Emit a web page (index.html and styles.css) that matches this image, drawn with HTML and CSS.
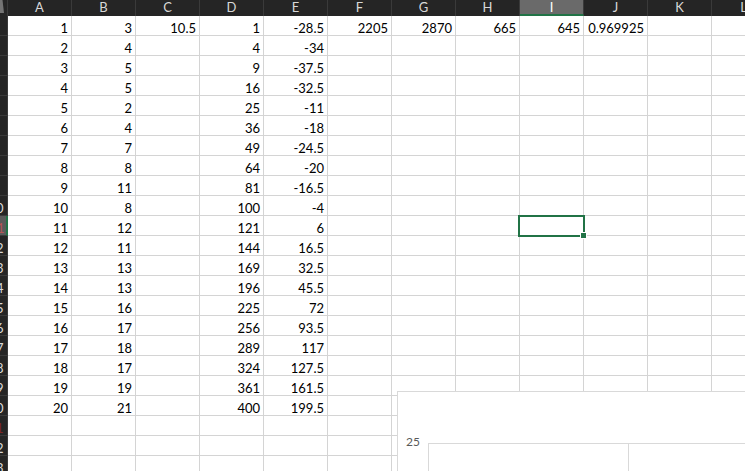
FILE: index.html
```html
<!DOCTYPE html>
<html>
<head>
<meta charset="utf-8">
<link rel="stylesheet" href="styles.css">
</head>
<body>
<div class="sheet">
  <div class="row hdr">
    <div class="corner"><svg width="7" height="16" viewBox="0 0 7 16"><polygon points="0,0 2.5,0 4,13 0,13" fill="#747474"/></svg></div>
    <div class="ch">A</div><div class="ch">B</div><div class="ch">C</div><div class="ch">D</div><div class="ch">E</div><div class="ch">F</div><div class="ch">G</div><div class="ch">H</div><div class="ch on">I</div><div class="ch">J</div><div class="ch">K</div><div class="ch">L</div>
  </div>
  <div class="row"><div class="rh"><span>1</span></div><div class="c">1</div><div class="c">3</div><div class="c">10.5</div><div class="c">1</div><div class="c">-28.5</div><div class="c">2205</div><div class="c">2870</div><div class="c">665</div><div class="c">645</div><div class="c">0.969925</div><div class="c"></div><div class="c"></div></div>
  <div class="row"><div class="rh"><span>2</span></div><div class="c">2</div><div class="c">4</div><div class="c"></div><div class="c">4</div><div class="c">-34</div><div class="c"></div><div class="c"></div><div class="c"></div><div class="c"></div><div class="c"></div><div class="c"></div><div class="c"></div></div>
  <div class="row"><div class="rh"><span>3</span></div><div class="c">3</div><div class="c">5</div><div class="c"></div><div class="c">9</div><div class="c">-37.5</div><div class="c"></div><div class="c"></div><div class="c"></div><div class="c"></div><div class="c"></div><div class="c"></div><div class="c"></div></div>
  <div class="row"><div class="rh"><span>4</span></div><div class="c">4</div><div class="c">5</div><div class="c"></div><div class="c">16</div><div class="c">-32.5</div><div class="c"></div><div class="c"></div><div class="c"></div><div class="c"></div><div class="c"></div><div class="c"></div><div class="c"></div></div>
  <div class="row"><div class="rh"><span>5</span></div><div class="c">5</div><div class="c">2</div><div class="c"></div><div class="c">25</div><div class="c">-11</div><div class="c"></div><div class="c"></div><div class="c"></div><div class="c"></div><div class="c"></div><div class="c"></div><div class="c"></div></div>
  <div class="row"><div class="rh"><span>6</span></div><div class="c">6</div><div class="c">4</div><div class="c"></div><div class="c">36</div><div class="c">-18</div><div class="c"></div><div class="c"></div><div class="c"></div><div class="c"></div><div class="c"></div><div class="c"></div><div class="c"></div></div>
  <div class="row"><div class="rh"><span>7</span></div><div class="c">7</div><div class="c">7</div><div class="c"></div><div class="c">49</div><div class="c">-24.5</div><div class="c"></div><div class="c"></div><div class="c"></div><div class="c"></div><div class="c"></div><div class="c"></div><div class="c"></div></div>
  <div class="row"><div class="rh"><span>8</span></div><div class="c">8</div><div class="c">8</div><div class="c"></div><div class="c">64</div><div class="c">-20</div><div class="c"></div><div class="c"></div><div class="c"></div><div class="c"></div><div class="c"></div><div class="c"></div><div class="c"></div></div>
  <div class="row"><div class="rh"><span>9</span></div><div class="c">9</div><div class="c">11</div><div class="c"></div><div class="c">81</div><div class="c">-16.5</div><div class="c"></div><div class="c"></div><div class="c"></div><div class="c"></div><div class="c"></div><div class="c"></div><div class="c"></div></div>
  <div class="row"><div class="rh"><span>10</span></div><div class="c">10</div><div class="c">8</div><div class="c"></div><div class="c">100</div><div class="c">-4</div><div class="c"></div><div class="c"></div><div class="c"></div><div class="c"></div><div class="c"></div><div class="c"></div><div class="c"></div></div>
  <div class="row"><div class="rh on"><span>11</span></div><div class="c">11</div><div class="c">12</div><div class="c"></div><div class="c">121</div><div class="c">6</div><div class="c"></div><div class="c"></div><div class="c"></div><div class="c active"><div class="sel"></div><div class="handle"></div></div><div class="c"></div><div class="c"></div><div class="c"></div></div>
  <div class="row"><div class="rh"><span>12</span></div><div class="c">12</div><div class="c">11</div><div class="c"></div><div class="c">144</div><div class="c">16.5</div><div class="c"></div><div class="c"></div><div class="c"></div><div class="c"></div><div class="c"></div><div class="c"></div><div class="c"></div></div>
  <div class="row"><div class="rh"><span>13</span></div><div class="c">13</div><div class="c">13</div><div class="c"></div><div class="c">169</div><div class="c">32.5</div><div class="c"></div><div class="c"></div><div class="c"></div><div class="c"></div><div class="c"></div><div class="c"></div><div class="c"></div></div>
  <div class="row"><div class="rh"><span>14</span></div><div class="c">14</div><div class="c">13</div><div class="c"></div><div class="c">196</div><div class="c">45.5</div><div class="c"></div><div class="c"></div><div class="c"></div><div class="c"></div><div class="c"></div><div class="c"></div><div class="c"></div></div>
  <div class="row"><div class="rh"><span>15</span></div><div class="c">15</div><div class="c">16</div><div class="c"></div><div class="c">225</div><div class="c">72</div><div class="c"></div><div class="c"></div><div class="c"></div><div class="c"></div><div class="c"></div><div class="c"></div><div class="c"></div></div>
  <div class="row"><div class="rh"><span>16</span></div><div class="c">16</div><div class="c">17</div><div class="c"></div><div class="c">256</div><div class="c">93.5</div><div class="c"></div><div class="c"></div><div class="c"></div><div class="c"></div><div class="c"></div><div class="c"></div><div class="c"></div></div>
  <div class="row"><div class="rh"><span>17</span></div><div class="c">17</div><div class="c">18</div><div class="c"></div><div class="c">289</div><div class="c">117</div><div class="c"></div><div class="c"></div><div class="c"></div><div class="c"></div><div class="c"></div><div class="c"></div><div class="c"></div></div>
  <div class="row"><div class="rh"><span>18</span></div><div class="c">18</div><div class="c">17</div><div class="c"></div><div class="c">324</div><div class="c">127.5</div><div class="c"></div><div class="c"></div><div class="c"></div><div class="c"></div><div class="c"></div><div class="c"></div><div class="c"></div></div>
  <div class="row"><div class="rh"><span>19</span></div><div class="c">19</div><div class="c">19</div><div class="c"></div><div class="c">361</div><div class="c">161.5</div><div class="c"></div><div class="c"></div><div class="c"></div><div class="c"></div><div class="c"></div><div class="c"></div><div class="c"></div></div>
  <div class="row"><div class="rh"><span>20</span></div><div class="c">20</div><div class="c">21</div><div class="c"></div><div class="c">400</div><div class="c">199.5</div><div class="c"></div><div class="c"></div><div class="c"></div><div class="c"></div><div class="c"></div><div class="c"></div><div class="c"></div></div>
  <div class="row"><div class="rh tint"><span>21</span></div><div class="c"></div><div class="c"></div><div class="c"></div><div class="c"></div><div class="c"></div><div class="c"></div><div class="c"></div><div class="c"></div><div class="c"></div><div class="c"></div><div class="c"></div><div class="c"></div></div>
  <div class="row"><div class="rh"><span>22</span></div><div class="c"></div><div class="c"></div><div class="c"></div><div class="c"></div><div class="c"></div><div class="c"></div><div class="c"></div><div class="c"></div><div class="c"></div><div class="c"></div><div class="c"></div><div class="c"></div></div>
  <div class="row"><div class="rh"><span>23</span></div><div class="c"></div><div class="c"></div><div class="c"></div><div class="c"></div><div class="c"></div><div class="c"></div><div class="c"></div><div class="c"></div><div class="c"></div><div class="c"></div><div class="c"></div><div class="c"></div></div>

  <div class="chart">
    <div class="chart-row">
      <div class="axis-label">25</div>
      <div class="plot"><div class="pc"></div><div class="pc"></div></div>
    </div>
  </div>
</div>
</body>
</html>
```
FILE: styles.css
```css
html, body {
  margin: 0;
  padding: 0;
  background: #ffffff;
  overflow: hidden;
}
body {
  font-family: Lato, "Liberation Sans", sans-serif;
  font-size: 13px;
  color: #000000;
}
.sheet {
  position: relative;
  width: 745px;
  height: 471px;
  overflow: hidden;
}
.row {
  display: grid;
  grid-template-columns: 8px repeat(12, 64px);
  height: 20px;
}
.hdr {
  height: 16px;
  background: #252525;
}
.corner {
  background: #252525;
  border-right: 1px solid #3a3a3a;
  box-sizing: border-box;
  height: 16px;
}
.corner svg {
  display: block;
}
.ch {
  height: 16px;
  box-sizing: border-box;
  border-right: 1px solid #3a3a3a;
  color: #d8d8d8;
  text-align: center;
  line-height: 14px;
}
.ch.on {
  background: #6a6a6a;
  color: #ffffff;
  border-bottom: 2px solid #217346;
}
.rh {
  background: #252525;
  border-right: 1px solid #3a3a3a;
  border-bottom: 1px solid #3a3a3a;
  box-sizing: border-box;
  height: 20px;
  overflow: hidden;
}
.rh span {
  display: block;
  width: 22px;
  margin-left: -15px;
  text-align: center;
  color: #d8d8d8;
  line-height: 24px;
  white-space: nowrap;
}
.rh.on {
  background: #5a5a5a;
  border-right: 2px solid #217346;
}
.rh.on span {
  color: #b45454;
  margin-left: -14px;
}
.rh.tint span {
  color: #7a2424;
}
.c {
  height: 20px;
  box-sizing: border-box;
  border-right: 1px solid #d4d4d4;
  border-bottom: 1px solid #d4d4d4;
  text-align: right;
  padding-right: 3px;
  line-height: 24px;
  white-space: nowrap;
}
.c.active {
  position: relative;
}
.sel {
  position: absolute;
  left: -2px;
  top: -1px;
  width: 67px;
  height: 22px;
  border: 2px solid #217346;
  box-sizing: border-box;
}
.handle {
  position: absolute;
  left: 61px;
  top: 17px;
  width: 5px;
  height: 5px;
  background: #217346;
  box-shadow: 0 0 0 1px #ffffff;
}
.chart {
  position: absolute;
  left: 397px;
  top: 391px;
  width: 380px;
  height: 100px;
  background: #ffffff;
  border: 1px solid #d9d9d9;
  box-sizing: border-box;
  padding-top: 51px;
}
.chart-row {
  display: flex;
  height: 60px;
}
.axis-label {
  flex: none;
  width: 30px;
  box-sizing: border-box;
  padding-left: 8px;
  margin-top: -7px;
  font-size: 12px;
  line-height: 12px;
  color: #595959;
}
.plot {
  display: flex;
  flex: 1;
  min-width: 0;
  border-top: 1px solid #d9d9d9;
  border-left: 1px solid #d9d9d9;
}
.pc {
  width: 199px;
  flex: none;
  border-right: 1px solid #d9d9d9;
}
```
